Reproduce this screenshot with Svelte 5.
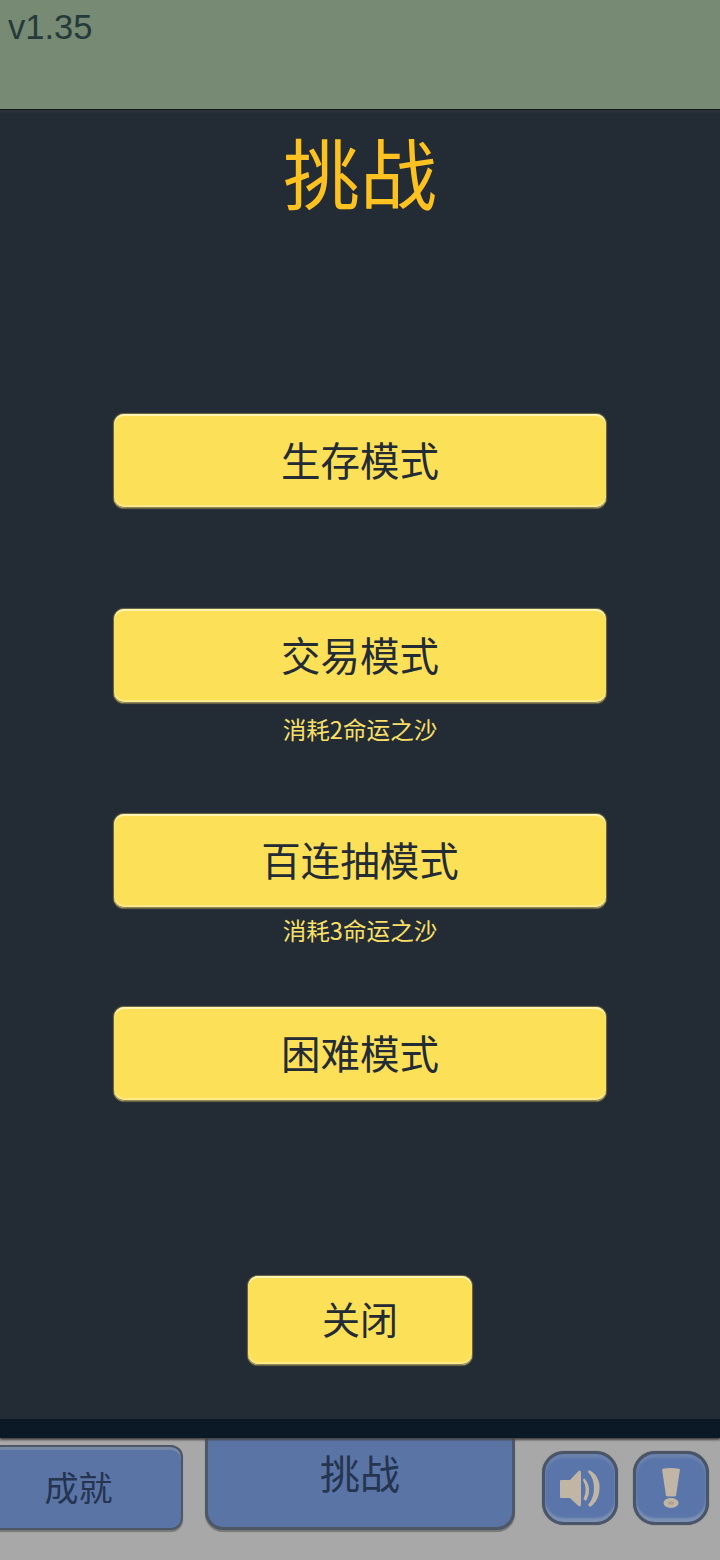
<script>
  const modes = [
    { label: '生存模式', note: '', tight: false },
    { label: '交易模式', note: '消耗2命运之沙', tight: false },
    { label: '百连抽模式', note: '消耗3命运之沙', tight: true },
    { label: '困难模式', note: '', tight: false }
  ];
</script>

<div class="screen">
  <header class="top"><span class="version">v1.35</span></header>

  <main class="panel">
    <h1>挑战</h1>
    <div class="menu">
      {#each modes as m}
        <div class="slot">
          <button class="gold wide">{m.label}</button>
          {#if m.note}<p class="note" class:tight={m.tight}>{m.note}</p>{/if}
        </div>
      {/each}
    </div>
    <button class="gold close">关闭</button>
  </main>
  <div class="edge"></div>

  <nav class="bar">
    <button class="tab achieve">成就</button>
    <button class="tab active">挑战</button>
    <button class="round" aria-label="声音">
      <svg viewBox="0 0 40 37" width="40" height="37">
        <path d="M1 10 H10 L18.500 1 Q21 -0.500 21 3 V34 Q21 37.500 18.500 36 L10 28 H1 Q0 28 0 27 V11 Q0 10 1 10 Z" fill="#c1b5a6"/>
        <path d="M24 8 Q33 18 26 31 L23.500 29 Q28 19 23 10 Z" fill="#c1b5a6"/>
        <path d="M29 0 Q36 3 39 12 Q41 22 36 31 Q33 35 30 37 L28 35 Q34 28 34 18 Q34 8 28 2 Z" fill="#c1b5a6"/>
      </svg>
    </button>
    <button class="round" aria-label="提示">
      <svg viewBox="0 0 18 40" width="18" height="40">
        <path d="M0 1 Q9 -1 18 1 L14 28 Q9 29 4 28 Z" fill="#c1b5a6"/>
        <ellipse cx="9" cy="35" rx="7.500" ry="5" fill="#c1b5a6"/>
        <ellipse cx="9" cy="35" rx="3" ry="1.800" fill="#ada294"/>
      </svg>
    </button>
  </nav>
</div>

<style>
  :global(body) { margin: 0; }
  .screen {
    width: 720px;
    height: 1560px;
    overflow: hidden;
    display: flex;
    flex-direction: column;
    font-family: "Noto Sans CJK SC", "Liberation Sans", sans-serif;
  }
  .top {
    height: 109px;
    flex: none;
    background: #778a74;
    border-bottom: 1px solid #10171c;
  }
  .version {
    display: block;
    padding: 7px 0 0 8px;
    font: 34.5px/40px "Liberation Sans", sans-serif;
    color: #253a3a;
  }
  .panel {
    height: 1309px;
    flex: none;
    box-sizing: border-box;
    background: #232b35;
    box-shadow: inset 0 5px 3px -3px #2f353c;
    display: flex;
    flex-direction: column;
    align-items: center;
  }
  h1 {
    margin: 6px 0 0;
    font-size: 77px;
    line-height: 110px;
    font-weight: 400;
    color: #fdc21f;
  }
  .menu {
    margin-top: 188px;
    display: grid;
    grid-template-rows: 195px 205px 193px 94px;
  }
  .slot { display: flex; flex-direction: column; align-items: center; }
  button { font-family: inherit; padding: 0; cursor: pointer; }
  .gold {
    display: block;
    box-sizing: border-box;
    background: #fce058;
    color: #232b35;
    border: 0;
    border-radius: 10px;
    box-shadow: inset 0 2px 0 #fff4b0, inset 0 -1px 0 #8f8650, inset 0 -3px 0 #fdea8c, 0 0 1px 1px #6f6a48;
    font-size: 39.5px;
    line-height: 1;
    padding-bottom: 5px;
  }
  .wide { width: 492px; height: 94px; }
  .note {
    margin: 8px 0 0;
    font-size: 23.6px;
    line-height: 36px;
    color: #f9e068;
  }
  .note.tight { margin-top: 4px; }
  .close {
    margin-top: 175px;
    width: 224px;
    height: 89px;
    font-size: 38px;
  }
  .edge {
    height: 19px;
    flex: none;
    background: #0b1826;
    box-shadow: 0 2px 2px #444;
    position: relative;
    z-index: 1;
  }
  .bar {
    flex: 1;
    background: #a8a8a8;
    display: flex;
    align-items: flex-start;
  }
  .tab {
    box-sizing: border-box;
    background: #5a74a6;
    color: #25344f;
    border: 2px solid #4d5765;
    font-size: 34px;
    line-height: 1;
  }
  .achieve {
    width: 211px;
    height: 85px;
    margin: 7px 0 0 -28px;
    padding: 0 0 2px 4px;
    border-left: 0;
    border-radius: 0 12px 12px 0;
    box-shadow: inset 0 3px 0 #7688a8, 0 2px 1px #777;
  }
  .active {
    width: 310px;
    height: 92px;
    margin-left: 22px;
    padding-bottom: 21px;
    font-size: 40px;
    border-width: 0 3px 3px;
    border-radius: 0 0 18px 18px;
    box-shadow: 0 2px 1px #777;
  }
  .round {
    box-sizing: border-box;
    width: 76px;
    height: 74px;
    margin: 13px 0 0 27px;
    padding: 0;
    background: #5a75a9;
    border: 3px solid #4a5668;
    border-radius: 22px;
    box-shadow: inset 0 4px 2px #6a82ad, inset 0 -4px 2px #7c90b3, 0 0 1px #4a5668;
    display: flex;
    align-items: center;
    justify-content: center;
  }
  .round + .round { margin-left: 15px; }
</style>
